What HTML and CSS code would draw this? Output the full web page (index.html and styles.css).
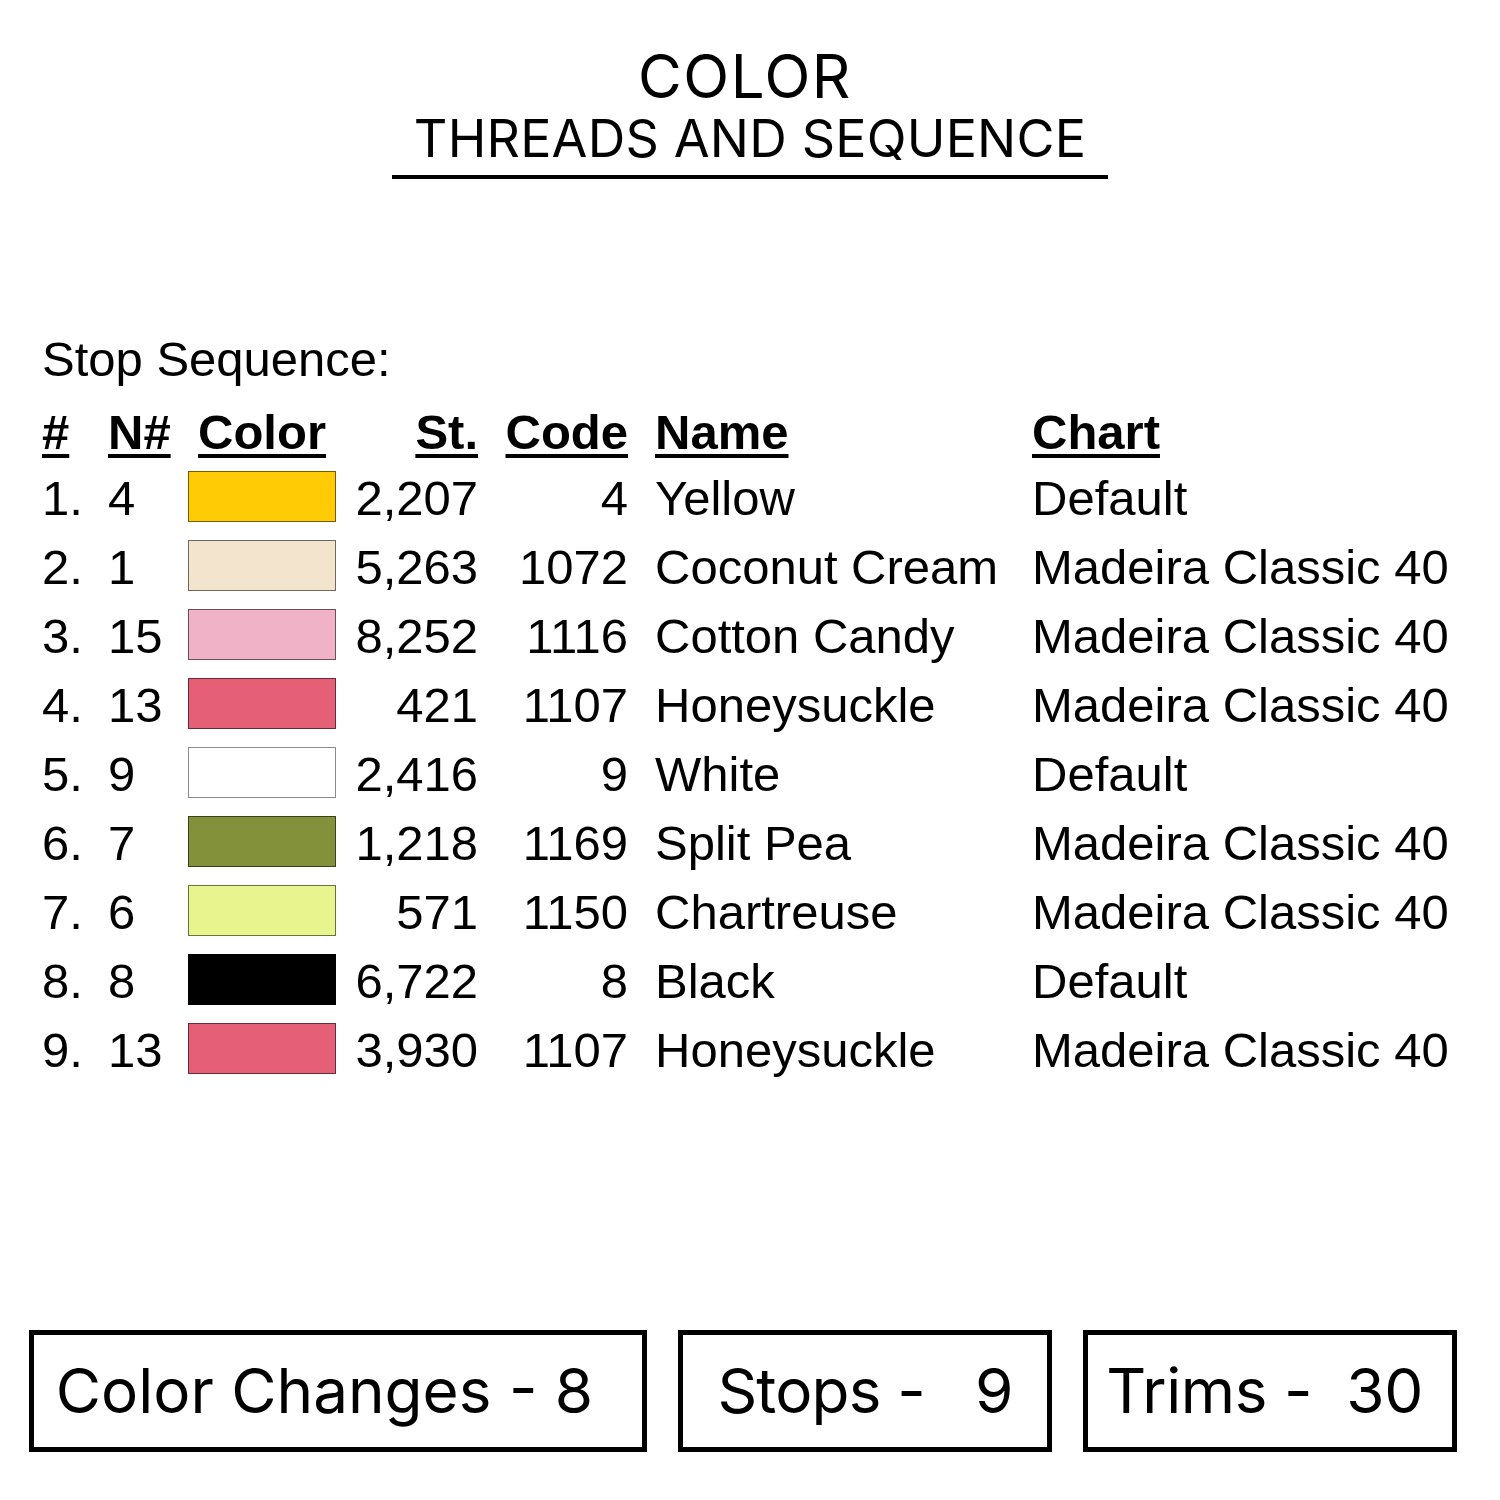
FILE: index.html
```html
<!DOCTYPE html>
<html>
<head>
<meta charset="utf-8">
<title>Color Threads and Sequence</title>
<link rel="stylesheet" href="styles.css">
</head>
<body>
<div class="page">
  <header class="title">
    <div class="title-main">COLOR</div>
    <div class="title-sub">THREADS AND SEQUENCE</div>
  </header>

  <section class="seq">
    <div class="seq-label">Stop Sequence:</div>
    <div class="grid">
      <div class="h"><span>#</span></div>
      <div class="h"><span>N#</span></div>
      <div class="h c"><span>Color</span></div>
      <div class="h r"><span>St.</span></div>
      <div class="h r"><span>Code</span></div>
      <div class="h n"><span>Name</span></div>
      <div class="h"><span>Chart</span></div>

      <div>1.</div><div>4</div><div class="sw"><i class="swatch yellow"></i></div><div class="r">2,207</div><div class="r">4</div><div class="n">Yellow</div><div>Default</div>
      <div>2.</div><div>1</div><div class="sw"><i class="swatch cream"></i></div><div class="r">5,263</div><div class="r">1072</div><div class="n">Coconut Cream</div><div>Madeira Classic 40</div>
      <div>3.</div><div>15</div><div class="sw"><i class="swatch candy"></i></div><div class="r">8,252</div><div class="r">1116</div><div class="n">Cotton Candy</div><div>Madeira Classic 40</div>
      <div>4.</div><div>13</div><div class="sw"><i class="swatch honey"></i></div><div class="r">421</div><div class="r">1107</div><div class="n">Honeysuckle</div><div>Madeira Classic 40</div>
      <div>5.</div><div>9</div><div class="sw"><i class="swatch white"></i></div><div class="r">2,416</div><div class="r">9</div><div class="n">White</div><div>Default</div>
      <div>6.</div><div>7</div><div class="sw"><i class="swatch pea"></i></div><div class="r">1,218</div><div class="r">1169</div><div class="n">Split Pea</div><div>Madeira Classic 40</div>
      <div>7.</div><div>6</div><div class="sw"><i class="swatch chart"></i></div><div class="r">571</div><div class="r">1150</div><div class="n">Chartreuse</div><div>Madeira Classic 40</div>
      <div>8.</div><div>8</div><div class="sw"><i class="swatch black"></i></div><div class="r">6,722</div><div class="r">8</div><div class="n">Black</div><div>Default</div>
      <div>9.</div><div>13</div><div class="sw"><i class="swatch honey"></i></div><div class="r">3,930</div><div class="r">1107</div><div class="n">Honeysuckle</div><div>Madeira Classic 40</div>
    </div>
  </section>

  <footer class="stats">
    <div class="stat wide">Color Changes - 8</div>
    <div class="stat mid">Stops -   9</div>
    <div class="stat last">Trims -  30</div>
  </footer>
</div>
</body>
</html>
```

FILE: styles.css
```css
* { box-sizing: border-box; }

html, body {
  margin: 0;
  padding: 0;
  background: #ffffff;
}

.page {
  width: 1500px;
  height: 1500px;
  color: #000;
  padding-top: 46px;
}

/* Title */
.title {
  display: flex;
  flex-direction: column;
  align-items: center;
  font-family: "Inter", "Open Sans", sans-serif;
  color: #000;
}

.title-main {
  font-size: 60px;
  line-height: 60px;
  font-weight: 400;
  padding-right: 10px;
  letter-spacing: 1.5px;
}

.title-sub {
  margin-top: 7px;
  width: 716px;
  text-align: center;
  font-size: 52px;
  line-height: 52px;
  font-weight: 400;
  padding-bottom: 10px;
  border-bottom: 4px solid #000;
  letter-spacing: 0.2px;
}

/* Sequence table */
.seq {
  margin-top: 152px;
  padding-left: 42px;
  font-family: "Liberation Sans", Arial, sans-serif;
  font-size: 49px;
}

.seq-label {
  line-height: 56px;
  height: 56px;
}

.grid {
  margin-top: 13px;
  display: grid;
  grid-template-columns: 66px 80px 148px 142px 150px 404px auto;
  grid-template-rows: 64px;
  grid-auto-rows: 69px;
  line-height: 69px;
  white-space: nowrap;
}

.grid .h {
  font-weight: 700;
  line-height: 64px;
}

.grid .h span {
  text-decoration: underline;
  text-decoration-thickness: 4px;
  text-underline-offset: 5px;
}

.grid .r { text-align: right; }
.grid .c { text-align: center; }
.grid .n { padding-left: 27px; }

.sw {
  display: flex;
  align-items: center;
}

.swatch {
  display: block;
  width: 148px;
  height: 51px;
  border: 1.5px solid rgba(0, 0, 0, 0.55);
  margin-top: -5px;
}

.yellow { background: #ffcb05; }
.cream  { background: #f3e4cd; }
.candy  { background: #f0b2c6; }
.honey  { background: #e56076; }
.white  { background: #ffffff; border-color: #8a8a8a; }
.pea    { background: #83913a; }
.chart  { background: #e8f58e; }
.black  { background: #000000; }

/* Stats boxes */
.stats {
  margin-top: 245px;
  padding-left: 29px;
  display: flex;
  gap: 31px;
}

.stat {
  width: 374px;
  height: 122px;
  border: 5px solid #000;
  display: flex;
  align-items: center;
  justify-content: center;
  font-family: "Inter", "Open Sans", sans-serif;
  font-size: 62px;
  font-weight: 400;
  white-space: pre;
  padding-bottom: 2px;
}

.stat.wide {
  width: 618px;
  padding-right: 27px;
}

.stat.mid {
  letter-spacing: -0.8px;
}

.stat.last {
  padding-right: 11px;
  letter-spacing: -0.4px;
}
```
